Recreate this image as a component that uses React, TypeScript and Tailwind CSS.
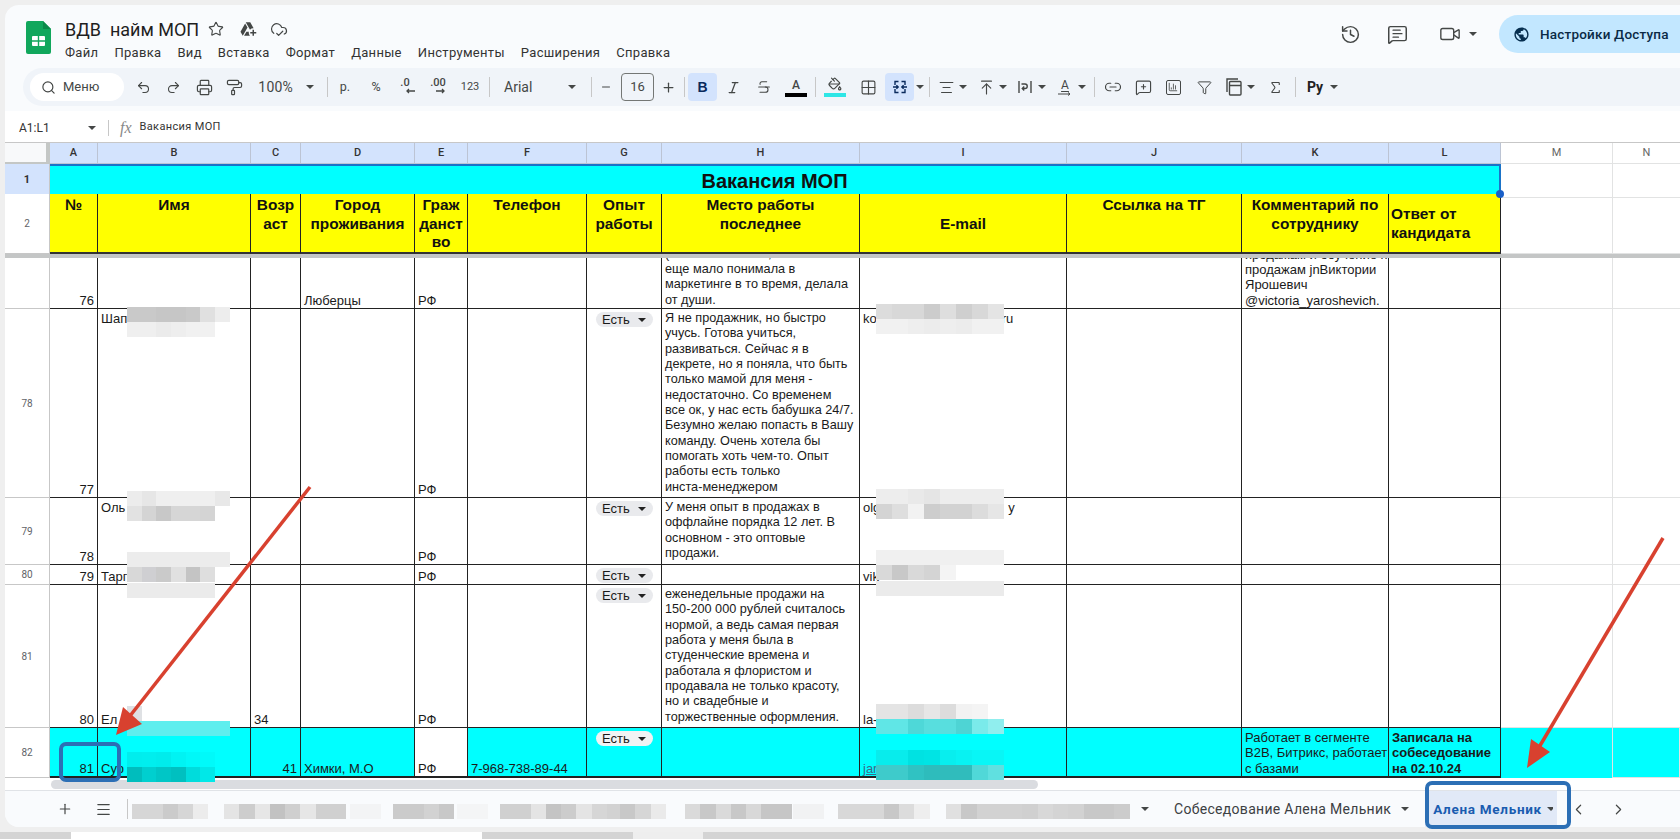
import React from "react";
import {
  Search, Undo2, Redo2, Printer, PaintRoller, Italic, Strikethrough, PaintBucket, Grid2x2, AlignCenter,
  ArrowUpToLine, Link2, MessageSquarePlus, ChartColumn, Funnel, Sigma, History, MessageSquareText, Video, Star,
  CloudCheck, Plus, Minus, Menu, ChevronLeft, ChevronRight,
} from "lucide-react";
import { MdPublic, MdOutlineAddToDrive } from "react-icons/md";

const ui = "font-['Roboto','Liberation_Sans',sans-serif]";
const ic = "#444746";
const rowCols = "grid grid-cols-[45px_48px_153px_50px_114px_53px_119px_75px_198px_207px_175px_147px_112px_112px_67px]";

function Caret({ c = ic }: { c?: string }) {
  return (
    <svg width="8" height="4" viewBox="0 0 8 4" className="shrink-0">
      <path d="M0 0h8L4 4z" fill={c} />
    </svg>
  );
}

function Tb({ c, children }: { c: string; children?: React.ReactNode }) {
  return <div className={"flex h-[28px] shrink-0 items-center justify-center " + c}>{children}</div>;
}

function Sep({ c }: { c: string }) {
  return (
    <div className={"flex h-full shrink-0 items-center justify-center " + c}>
      <div className="h-[20px] w-px bg-[#c7c7c7]" />
    </div>
  );
}

type TileRow = { x: number; y: number; c: string[] };
const blurs: TileRow[] = [
  { x: 127, y: 307, c: ["#c9c9c9", "#c9c9c9", "#c6c6c6", "#c6c6c6", "#c9c9c9", "#e0e0e0", "#ededed"] },
  { x: 127, y: 322, c: ["#efefef", "#efefef", "#ebebeb", "#eeeeee", "#f1f1f1", "#f1f1f1"] },
  { x: 127, y: 491, c: ["#ececec", "#e6e6e6", "#efefef", "#efefef", "#efefef", "#efefef", "#e8e8e8"] },
  { x: 127, y: 506, c: ["#e2e2e2", "#d4d4d4", "#c8c8c8", "#d6d6d6", "#d6d6d6", "#d4d4d4"] },
  { x: 127, y: 552, c: ["#ececec", "#ececec", "#ececec", "#ececec", "#ececec", "#ececec", "#ececec"] },
  { x: 127, y: 567, c: ["#d8d8d8", "#cfcfd2", "#cacaca", "#e0e0e0", "#c4c4c4", "#dedede"] },
  { x: 127, y: 583, c: ["#ebebeb", "#ebebeb", "#ebebeb", "#ebebeb", "#ebebeb", "#ebebeb"] },
  { x: 127, y: 706, c: ["#dfe1e4"] },
  { x: 127, y: 721, c: ["#5feeee", "#5feeee", "#5feeee", "#5feeee", "#5feeee", "#5feeee", "#5feeee"] },
  { x: 127, y: 752, c: ["#00eded", "#00eeee", "#00ecec", "#00f3f3", "#00f8f8", "#00fafa"] },
  { x: 127, y: 767, c: ["#00bdbd", "#00cfcf", "#00c6c6", "#00c0c0", "#00dcdc", "#00e8e8"] },
  { x: 876, y: 304, c: ["#dcdcdc", "#d8d8d8", "#d8d8d8", "#cccccc", "#dedede", "#cfcfcf", "#d8d8d8", "#e4e4e4"] },
  { x: 876, y: 319, c: ["#f1f1f1", "#f1f1f1", "#eeeeee", "#ececec", "#eeeeee", "#ececec", "#f1f1f1", "#f1f1f1"] },
  { x: 876, y: 489, c: ["#ededed", "#ededed", "#e9e9e9", "#e5e5e5", "#ededed", "#ededed", "#ededed", "#ededed"] },
  { x: 876, y: 504, c: ["#d4d4d4", "#dedede", "#f2f2f2", "#cdcdcd", "#d2d2d2", "#d2d2d2", "#dcdcdc", "#e6e6e6"] },
  { x: 876, y: 550, c: ["#f0f0f0", "#f0f0f0", "#f0f0f0", "#f0f0f0", "#f0f0f0", "#f0f0f0", "#f0f0f0", "#f0f0f0"] },
  { x: 876, y: 565, c: ["#d9d9d9", "#c8c8c8", "#d9d9d9", "#d4d4d4", "#f4f4f4"] },
  { x: 876, y: 581, c: ["#ebebeb", "#ebebeb", "#ebebeb", "#ebebeb", "#ebebeb", "#ebebeb", "#ebebeb", "#ebebeb"] },
  { x: 876, y: 704, c: ["#e4e4e4", "#e4e4e4", "#dcdcdc", "#e6e6e6", "#dcdcdc", "#f2f2f2", "#f4f4f4"] },
  { x: 876, y: 719, c: ["#60e6e6", "#60e6e6", "#4ed8d8", "#58dede", "#58dede", "#4ed4d4", "#7aeaea", "#90eeee"] },
  { x: 876, y: 750, c: ["#08ecec", "#08ecec", "#00e2e2", "#00e4e4", "#08eeee", "#08f2f2", "#08f6f6", "#08f6f6"] },
  { x: 876, y: 765, c: ["#3ecbcb", "#3ecbcb", "#30c2c2", "#2ebcbc", "#30bcbc", "#30bcbc", "#50d8d8", "#60e0e0"] },
  { x: 132, y: 804, c: ["#d6d6d6", "#d6d6d6", "#cbcbcb", "#d6d6d6", "#ececec"] },
  { x: 224, y: 804, c: ["#e4e4e4", "#cdcdcd", "#e6e6e6", "#c2c2c2", "#cfcfcf", "#e6e6e6", "#d0d0d0", "#d0d0d0"] },
  { x: 350, y: 804, c: ["#f3f4f5", "#f3f4f5"] },
  { x: 393, y: 804, c: ["#cbcbcb", "#cbcbcb", "#d2d2d2", "#c8c8c8"] },
  { x: 457, y: 804, c: ["#f4f5f6", "#f4f5f6"] },
  { x: 500, y: 804, c: ["#d0d0d0", "#d0d0d0", "#e4e4e4", "#c4c4c4", "#cccccc", "#e4e4e4", "#d6d6d6", "#d2d2d2"] },
  { x: 620, y: 804, c: ["#c8c8c8", "#d6d6d6", "#eaeaea"] },
  { x: 685, y: 804, c: ["#dadada", "#c8c8c8", "#dadada", "#c8c8c8", "#d8d8d8", "#c6c6c6", "#c6c6c6"] },
  { x: 793, y: 804, c: ["#f1f2f3", "#f1f2f3"] },
  { x: 838, y: 804, c: ["#d8d8d8", "#d8d8d8", "#d8d8d8", "#c8c8c8", "#dcdcdc", "#eeeeee"] },
  { x: 946, y: 804, c: ["#e0e0e0", "#c8c8c8", "#d2d2d2", "#d2d2d2", "#d2d2d2", "#d0d0d0", "#d8d8d8", "#d4d4d4", "#d2d2d2", "#c8c8c8", "#c8c8c8", "#cccccc"] },
];

const tileWidth = (x: number) => (x === 876 ? 16 : x === 127 ? 14.7 : 15.3);

const bd = "border-r border-b border-[#222]";

function Cell({ c = "", children }: { c?: string; children?: React.ReactNode }) {
  return (
    <div className={"flex min-w-0 flex-col overflow-hidden whitespace-pre px-[3px] text-[13px] leading-[15.33px] text-[#1a1a1a] " + bd + " " + c}>
      {children}
    </div>
  );
}

function Free({ c = "" }: { c?: string }) {
  return <div className={"border-r border-b border-[#e2e3e3] " + c} />;
}

function Gut({ n, c = "" }: { n?: string; c?: string }) {
  return (
    <div className={"flex items-center justify-center border-r border-b border-[#c7c7c7] bg-white text-[10px] text-[#5f6368] " + ui + " " + c}>
      {n}
    </div>
  );
}

function Chip({ c = "bg-[#e9eaed]" }: { c?: string }) {
  return (
    <div className={"mt-[3px] ml-[6px] flex h-[15px] w-[57px] items-center justify-between rounded-full pr-[7px] pl-[6px] text-[13px] " + c}>
      <span>Есть</span>
      <Caret c="#222" />
    </div>
  );
}

function ColH({ t, c = "" }: { t: string; c?: string }) {
  return (
    <div className={"flex items-center justify-center border-r border-b border-[#bcc4d4] bg-[#d3e3fd] text-[11px] font-medium text-[#333] " + ui + " " + c}>
      {t}
    </div>
  );
}

function Head({ c = "pt-[2px]", children }: { c?: string; children?: React.ReactNode }) {
  return (
    <div className={"overflow-hidden whitespace-pre-line border-r border-b-2 border-r-[#222] border-b-[#333] bg-[#ffff00] text-center text-[15.4px] font-bold leading-[18.6px] text-[#111] " + c}>
      {children}
    </div>
  );
}

export default function App() {
  return (
    <div className="relative flex h-[839px] w-[1680px] flex-col overflow-hidden bg-[#efefef] font-['Liberation_Sans',Arial,sans-serif]">
      <div className="mt-[5px] ml-[5px] flex h-[822px] flex-col overflow-hidden rounded-l-[14px] bg-[#f9fbfd]">
        {/* title bar */}
        <div className={"flex h-[63px] shrink-0 items-start " + ui}>
          <svg width="25" height="33" viewBox="0 0 25 33" className="mt-[16px] ml-[21px] shrink-0">
            <path d="M2 0h15l8 8v23a2 2 0 0 1-2 2H2a2 2 0 0 1-2-2V2a2 2 0 0 1 2-2z" fill="#11a75c" />
            <path d="M17 0l8 8h-8z" fill="#0c8a4a" />
            <rect x="6" y="15" width="13" height="10" rx="1" fill="#fff" />
            <path d="M6 20h13M12.5 15v10" stroke="#11a75c" strokeWidth="1.4" />
          </svg>
          <div className="ml-[14px] flex flex-col">
            <div className="mt-[11px] flex h-[26px] items-center">
              <span className="w-[141px] whitespace-pre text-[18px] text-[#1f1f1f]">ВДВ  найм МОП</span>
              <Star size={16} color={ic} strokeWidth={1.7} className="ml-[2px]" />
              <MdOutlineAddToDrive size={18} color={ic} className="ml-[15px]" />
              <CloudCheck size={18} color={ic} strokeWidth={1.6} className="ml-[13px]" />
            </div>
            <div className="mt-[2px] flex gap-[16px] text-[13px] leading-[18px] tracking-[0.31px] text-[#333]">
              <span>Файл</span><span>Правка</span><span>Вид</span><span>Вставка</span><span>Формат</span>
              <span>Данные</span><span>Инструменты</span><span>Расширения</span><span>Справка</span>
            </div>
          </div>
          <div className="ml-auto mt-[10px] flex items-center">
            <History size={21} color={ic} strokeWidth={1.7} />
            <MessageSquareText size={21} color={ic} strokeWidth={1.7} className="ml-[26px]" />
            <Video size={22} color={ic} strokeWidth={1.5} className="ml-[31px]" />
            <div className="ml-[8px]"><Caret /></div>
            <div className="ml-[22px] flex h-[38px] w-[181px] items-center whitespace-nowrap rounded-l-[19px] bg-[#c2e7ff] pl-[14px] text-[13.5px] font-medium text-[#0a2a45]">
              <MdPublic size={17} color="#062e4f" className="shrink-0" />
              <span className="ml-[10px] tracking-[0.2px]">Настройки Доступа</span>
            </div>
          </div>
        </div>

        {/* toolbar */}
        <div className={"ml-[18px] flex h-[38px] shrink-0 items-center rounded-l-[19px] bg-[#f0f4f9] text-[#444746] " + ui}>
          <div className="ml-[7px] flex h-[28px] w-[94px] shrink-0 items-center rounded-full bg-white pl-[11px] text-[13px]">
            <Search size={15} color={ic} strokeWidth={1.9} />
            <span className="ml-[7px]">Меню</span>
          </div>
          <Tb c="ml-[4px] w-[30px]"><Undo2 size={15} color={ic} strokeWidth={1.7} /></Tb>
          <Tb c="w-[30px]"><Redo2 size={15} color={ic} strokeWidth={1.7} /></Tb>
          <Tb c="ml-px w-[30px]"><Printer size={17} color={ic} strokeWidth={1.7} /></Tb>
          <Tb c="w-[30px]"><PaintRoller size={17} color={ic} strokeWidth={1.7} /></Tb>
          <Tb c="w-[51px] justify-end pr-[7px] text-[14px] tracking-[0.2px]">100%</Tb>
          <Tb c="w-[20px]"><Caret /></Tb>
          <Sep c="w-[14px]" />
          <Tb c="w-[22px] text-[12.5px]">р.</Tb>
          <Tb c="w-[40px] text-[12.5px]">%</Tb>
          <Tb c="w-[23px]">
            <div className="relative flex w-full flex-col items-center text-[11px] font-medium leading-[10px]">
              <span className="-ml-[5px] -mt-[2px]">.0</span>
              <svg width="10" height="6" viewBox="0 0 10 6" className="ml-[4px]"><path d="M10 3H2M4 1 2 3l2 2" stroke={ic} strokeWidth="1.3" fill="none" /></svg>
            </div>
          </Tb>
          <Tb c="w-[38px]">
            <div className="relative flex w-full flex-col items-center text-[11px] font-medium leading-[10px]">
              <span className="-mt-[2px]">.00</span>
              <svg width="10" height="6" viewBox="0 0 10 6" className="ml-[6px]"><path d="M0 3h8M6 1l2 2-2 2" stroke={ic} strokeWidth="1.3" fill="none" /></svg>
            </div>
          </Tb>
          <Tb c="w-[26px] text-[11px]">123</Tb>
          <Sep c="w-[12px]" />
          <Tb c="w-[67px] justify-start pl-[9px] text-[14px]">Arial</Tb>
          <Tb c="w-[20px]"><Caret /></Tb>
          <Sep c="w-[18px]" />
          <Tb c="w-[12px]"><Minus size={12} color={ic} strokeWidth={2} /></Tb>
          <Tb c="ml-[9px] h-[23px] w-[33px] rounded-[4px] border border-[#747775] text-[13px]">16</Tb>
          <Tb c="ml-[6px] w-[16px]"><Plus size={15} color={ic} strokeWidth={2} /></Tb>
          <Sep c="ml-[4px] w-[8px]" />
          <Tb c="w-[29px] rounded-[4px] bg-[#d3e3fd] font-['Liberation_Sans',sans-serif] text-[14px] font-bold text-[#0a2a5c]">B</Tb>
          <Tb c="ml-px w-[30px]"><Italic size={15} color={ic} strokeWidth={2} /></Tb>
          <Tb c="ml-px w-[30px]"><Strikethrough size={16} color={ic} strokeWidth={1.6} /></Tb>
          <Tb c="ml-[2px] w-[30px]">
            <div className="flex w-[22px] flex-col items-center text-[12px] font-medium leading-[14px]">
              <span>A</span>
              <div className="mt-px h-[4px] w-[22px] bg-black" />
            </div>
          </Tb>
          <Sep c="w-[8px]" />
          <Tb c="ml-px w-[30px]">
            <div className="flex w-[22px] flex-col items-center">
              <PaintBucket size={14} color={ic} strokeWidth={2} />
              <div className="mt-[2px] h-[4px] w-[22px] bg-[#2ee6e6]" />
            </div>
          </Tb>
          <Tb c="ml-[3px] w-[30px]"><Grid2x2 size={17} color={ic} strokeWidth={1.6} /></Tb>
          <Tb c="ml-[2px] w-[29px] rounded-[4px] bg-[#d3e3fd]">
            <svg width="16" height="16" viewBox="0 0 16 16" fill="none" stroke="#0a2a5c" strokeWidth="1.4">
              <path d="M3 6V2.5h3.5M9.5 2.5H13V6M3 10v3.5h3.5M9.5 13.5H13V10M1 8h5M4.4 6.2 6.2 8l-1.8 1.8M15 8h-5M11.6 6.2 9.8 8l1.8 1.8" />
            </svg>
          </Tb>
          <Tb c="w-[12px]"><Caret /></Tb>
          <Sep c="w-[6px]" />
          <Tb c="ml-px w-[26px]"><AlignCenter size={17} color={ic} strokeWidth={1.5} /></Tb>
          <Tb c="w-[8px]"><Caret /></Tb>
          <Tb c="ml-[6px] w-[26px]"><ArrowUpToLine size={17} color={ic} strokeWidth={1.6} /></Tb>
          <Tb c="w-[8px]"><Caret /></Tb>
          <Tb c="ml-[5px] w-[26px]">
            <svg width="16" height="16" viewBox="0 0 16 16" fill="none" stroke={ic} strokeWidth="1.4">
              <path d="M2 2v12M14 2v12M4.5 5H8a2 2 0 0 1 0 4.5H5.5M7.2 7.6 5.3 9.5l1.9 1.9" />
            </svg>
          </Tb>
          <Tb c="w-[8px]"><Caret /></Tb>
          <Tb c="ml-[6px] w-[26px]">
            <div className="flex w-[14px] flex-col items-center text-[12px] leading-[13px]">
              <span className="underline underline-offset-2">A</span>
              <svg width="14" height="4" viewBox="0 0 14 4"><path d="M0 2h12M10 .5 12 2l-2 1.5" stroke={ic} fill="none" /></svg>
            </div>
          </Tb>
          <Tb c="w-[8px]"><Caret /></Tb>
          <Sep c="ml-[4px] w-[8px]" />
          <Tb c="ml-[2px] w-[26px]"><Link2 size={18} color={ic} strokeWidth={1.6} /></Tb>
          <Tb c="ml-[4px] w-[26px]"><MessageSquarePlus size={17} color={ic} strokeWidth={1.6} /></Tb>
          <Tb c="ml-[4px] w-[26px]">
            <div className="flex h-[15px] w-[15px] items-center justify-center rounded-[2px] border-[1.5px] border-[#444746]">
              <ChartColumn size={10} color={ic} strokeWidth={2} />
            </div>
          </Tb>
          <Tb c="ml-[5px] w-[26px]"><Funnel size={15} color={ic} strokeWidth={1.6} /></Tb>
          <Tb c="ml-[4px] w-[26px]">
            <svg width="16" height="18" viewBox="0 0 16 18" fill="none" stroke={ic} strokeWidth="1.4">
              <rect x="3.5" y="3.5" width="11.5" height="13.5" rx="1" />
              <path d="M1 14V1h11M3.5 7.5H15M6.5 10v.01M9.3 10v.01M12 10v.01M6.5 13v.01M9.3 13v.01M12 13v.01" />
            </svg>
          </Tb>
          <Tb c="w-[8px]"><Caret /></Tb>
          <Tb c="ml-[7px] w-[26px]"><Sigma size={15} color={ic} strokeWidth={1.8} /></Tb>
          <Sep c="ml-[3px] w-[8px]" />
          <Tb c="ml-[3px] w-[26px] text-[14px] font-bold text-[#222]">Pу</Tb>
          <Tb c="ml-[2px] w-[8px]"><Caret /></Tb>
        </div>

        {/* formula bar */}
        <div className={"mt-[5px] flex h-[31px] shrink-0 items-center bg-white pt-[2px] text-[#333] " + ui}>
          <span className="ml-[14px] w-[69px] text-[12px]">A1:L1</span>
          <Caret />
          <div className="ml-[12px] h-[16px] w-px bg-[#c7c7c7]" />
          <span className="ml-[11px] font-['Liberation_Serif',serif] text-[16px] italic text-[#888]">fx</span>
          <span className="ml-[8px] text-[11px] tracking-[0.35px]">Вакансия МОП</span>
        </div>

        {/* sheet */}
        <div className="shrink-0 bg-white">
          <div className={rowCols + " h-[22px] border-t border-[#c7c7c7]"}>
            <div className="border-r-[4px] border-b-[2px] border-[#c4c7c5] bg-[#f8f9fa]" />
            <ColH t="A" /><ColH t="B" /><ColH t="C" /><ColH t="D" /><ColH t="E" /><ColH t="F" /><ColH t="G" />
            <ColH t="H" /><ColH t="I" /><ColH t="J" /><ColH t="K" /><ColH t="L" />
            <div className={"flex items-center justify-center border-r border-b border-[#e2e3e3] text-[11px] text-[#666] " + ui}>M</div>
            <div className={"flex items-center justify-center border-b border-[#e2e3e3] text-[11px] text-[#666] " + ui}>N</div>
          </div>

          <div className={rowCols + " h-[30px]"}>
            <div className={"flex items-center justify-center border-r border-b border-[#c7c7c7] bg-[#d3e3fd] text-[11px] font-bold text-[#333] " + ui}>1</div>
            <div className="col-span-12 flex items-center justify-center border-t-2 border-r-2 border-b-2 border-t-[#1a73c8] border-r-[#1a73c8] border-b-[#333] bg-[#00ffff] text-[20px] font-bold text-[#111]">
              Вакансия МОП
            </div>
            <Free /><Free c="border-r-0" />
          </div>

          <div className={rowCols + " h-[60px]"}>
            <Gut n="2" />
            <Head>№</Head>
            <Head>Имя</Head>
            <Head>{"Возр\nаст"}</Head>
            <Head>{"Город\nпроживания"}</Head>
            <Head>{"Граж\nданст\nво"}</Head>
            <Head>Телефон</Head>
            <Head>{"Опыт\nработы"}</Head>
            <Head>{"Место работы\nпоследнее"}</Head>
            <Head c="flex items-center justify-center pt-[3px]">E-mail</Head>
            <Head>Ссылка на ТГ</Head>
            <Head>{"Комментарий по\nсотруднику"}</Head>
            <Head c="flex items-center justify-start pt-[2px] pl-[2px] text-left">{"Ответ от\nкандидата"}</Head>
            <Free /><Free c="border-r-0" />
          </div>

          <div className="h-[4px] bg-[#c4c6c6]" />

          {/* row 77 */}
          <div className={rowCols + " h-[51px]"}>
            <Gut />
            <Cell c="justify-end text-right">76</Cell>
            <Cell />
            <Cell />
            <Cell c="justify-end">Люберцы</Cell>
            <Cell c="justify-end">РФ</Cell>
            <Cell />
            <Cell />
            <Cell c="justify-end text-[12.7px]!">{"(только начинала, и\nеще мало понимала в\nмаркетинге в то время, делала\nот души."}</Cell>
            <Cell />
            <Cell />
            <Cell c="justify-end">{"продажам и обучение по\nпродажам jnВиктории\nЯрошевич\n@victoria_yaroshevich."}</Cell>
            <Cell />
            <Free /><Free c="border-r-0" />
          </div>

          {/* row 78 */}
          <div className={rowCols + " h-[189px]"}>
            <Gut n="78" />
            <Cell c="justify-end text-right">77</Cell>
            <Cell c="justify-start pt-[2px]">Шап</Cell>
            <Cell />
            <Cell />
            <Cell c="justify-end">РФ</Cell>
            <Cell />
            <Cell c="px-0"><Chip /></Cell>
            <Cell c="justify-start pt-[2px] text-[12.7px]!">
              {"Я не продажник, но быстро\nучусь. Готова учиться,\nразвиваться. Сейчас я в\nдекрете, но я поняла, что быть\nтолько мамой для меня -\nнедостаточно. Со временем\nвсе ок, у нас есть бабушка 24/7.\nБезумно желаю попасть в Вашу\nкоманду. Очень хотела бы\nпомогать хоть чем-то. Опыт\nработы есть только\nинста-менеджером"}
            </Cell>
            <Cell c="flex-row justify-start pt-[2px]"><span>ko</span><span className="ml-[125px]">ru</span></Cell>
            <Cell />
            <Cell />
            <Cell />
            <Free /><Free c="border-r-0" />
          </div>

          {/* row 79 */}
          <div className={rowCols + " h-[67px]"}>
            <Gut n="79" />
            <Cell c="justify-end text-right">78</Cell>
            <Cell c="justify-start pt-[2px]">Оль</Cell>
            <Cell />
            <Cell />
            <Cell c="justify-end">РФ</Cell>
            <Cell />
            <Cell c="px-0"><Chip /></Cell>
            <Cell c="justify-start pt-[2px] text-[12.7px]!">{"У меня опыт в продажах в\nоффлайне порядка 12 лет. В\nосновном - это оптовые\nпродажи."}</Cell>
            <Cell c="flex-row justify-start pt-[2px]"><span>olg</span><span className="ml-[128px]">y</span></Cell>
            <Cell />
            <Cell />
            <Cell />
            <Free /><Free c="border-r-0" />
          </div>

          {/* row 80 */}
          <div className={rowCols + " h-[20px]"}>
            <Gut n="80" />
            <Cell c="justify-end text-right">79</Cell>
            <Cell c="justify-end">Тарг</Cell>
            <Cell />
            <Cell />
            <Cell c="justify-end">РФ</Cell>
            <Cell />
            <Cell c="px-0"><Chip /></Cell>
            <Cell />
            <Cell c="justify-end">vik</Cell>
            <Cell />
            <Cell />
            <Cell />
            <Free /><Free c="border-r-0" />
          </div>

          {/* row 81 */}
          <div className={rowCols + " h-[143px]"}>
            <Gut n="81" />
            <Cell c="justify-end text-right">80</Cell>
            <Cell c="justify-end">Ел</Cell>
            <Cell c="justify-end">34</Cell>
            <Cell />
            <Cell c="justify-end">РФ</Cell>
            <Cell />
            <Cell c="px-0"><Chip /></Cell>
            <Cell c="justify-end pb-[2px] text-[12.7px]!">
              {"еженедельные продажи на\n150-200 000 рублей считалось\nнормой, а ведь самая первая\nработа у меня была в\nстуденческие времена и\nработала я флористом и\nпродавала не только красоту,\nно и свадебные и\nторжественные оформления."}
            </Cell>
            <Cell c="justify-end">la-</Cell>
            <Cell />
            <Cell />
            <Cell />
            <Free /><Free c="border-r-0" />
          </div>

          {/* row 82 */}
          <div className={rowCols + " h-[50px] bg-[#00ffff]"}>
            <Gut n="82" />
            <Cell c="justify-end border-b-2 text-right">81</Cell>
            <Cell c="justify-end border-b-2">Сур</Cell>
            <Cell c="justify-end border-b-2 text-right">41</Cell>
            <Cell c="justify-end border-b-2">Химки, М.О</Cell>
            <Cell c="justify-end border-b-2 bg-white">РФ</Cell>
            <Cell c="justify-end border-b-2">7-968-738-89-44</Cell>
            <Cell c="border-b-2 px-0"><Chip c="bg-[#f1f3f4]" /></Cell>
            <Cell c="border-b-2" />
            <Cell c="justify-end border-b-2"><span className="text-[#3c6a8a] underline">jar</span></Cell>
            <Cell c="border-b-2" />
            <Cell c="justify-end border-b-2">{"Работает в сегменте\nВ2В, Битрикс, работает\nс базами"}</Cell>
            <Cell c="justify-end border-b-2 font-bold">{"Записала на\nсобеседование\nна 02.10.24"}</Cell>
            <Free c="border-b-0" /><Free c="border-0" />
          </div>

          {/* scrollbar */}
          <div className="h-[13px] border-b border-[#e0e3e7] pt-[2px] pl-[46px]">
            <div className="h-[9px] w-[987px] rounded-full bg-[#dadce0]" />
          </div>
        </div>

        {/* tabs */}
        <div className={"flex h-[36px] shrink-0 items-center bg-[#f9fbfd] text-[14px] text-[#3c4043] " + ui}>
          <Plus size={16} color={ic} strokeWidth={1.8} className="ml-[52px]" />
          <Menu size={17} color={ic} strokeWidth={1.7} className="ml-[22px]" />
          <div className="ml-[15px] h-[20px] w-px bg-[#c7c7c7]" />
          <div className="ml-[1013px]"><Caret /></div>
          <span className="ml-[25px] whitespace-nowrap tracking-[0.3px]">Собеседование Алена Мельник</span>
          <div className="ml-[10px]"><Caret /></div>
          <div className="ml-[16px] flex h-full w-[132px] shrink-0 items-center whitespace-nowrap bg-[#e1e9f7] pl-[8px] font-bold tracking-[0.7px] text-[#1a5cb0]">
            <span className="text-[13.5px]">Алена Мельник</span>
            <div className="ml-[5px] w-[6px] shrink-0 overflow-hidden"><Caret /></div>
          </div>
          <ChevronLeft size={17} color={ic} strokeWidth={1.7} className="ml-[13px]" />
          <ChevronRight size={17} color={ic} strokeWidth={1.7} className="ml-[23px]" />
        </div>
      </div>

      {/* bottom strip of the window behind */}
      <div className="mt-[5px] flex h-[7px] bg-[#d4d4d4]">
        <div className="ml-[71px] w-[411px] bg-white" />
        <div className="ml-[151px] w-[70px] bg-[#eeeeee]" />
      </div>

      {/* pixelated redactions */}
      {blurs.map((b) => (
        <div key={b.x + "-" + b.y} className="absolute flex h-[15.3px]" style={{ left: b.x, top: b.y }}>
          {b.c.map((col, i) => (
            <div key={i} className="h-full" style={{ background: col, width: tileWidth(b.x) }} />
          ))}
        </div>
      ))}

      {/* selection handle */}
      <div className="absolute top-[190px] left-[1496px] h-[8px] w-[8px] rounded-full bg-[#1a5fc8]" />

      {/* annotation rectangles */}
      <div className="absolute top-[742px] left-[59px] h-[40px] w-[62px] rounded-[7px] border-[4px] border-[#2c6fb5]" />
      <div className="absolute top-[781px] left-[1425px] h-[48px] w-[146px] rounded-[7px] border-[4px] border-[#2c6fb5]" />

      {/* annotation arrows */}
      <svg className="pointer-events-none absolute top-0 left-0" width="1680" height="839" viewBox="0 0 1680 839">
        <path d="M310 487 126 721" stroke="#d8412f" strokeWidth="3.5" />
        <path d="M116 735 123 707 142 724z" fill="#d8412f" />
        <path d="M1663 538 1538 749" stroke="#d8412f" strokeWidth="3.5" />
        <path d="M1527 768 1531 739 1550 752z" fill="#d8412f" />
      </svg>
    </div>
  );
}
